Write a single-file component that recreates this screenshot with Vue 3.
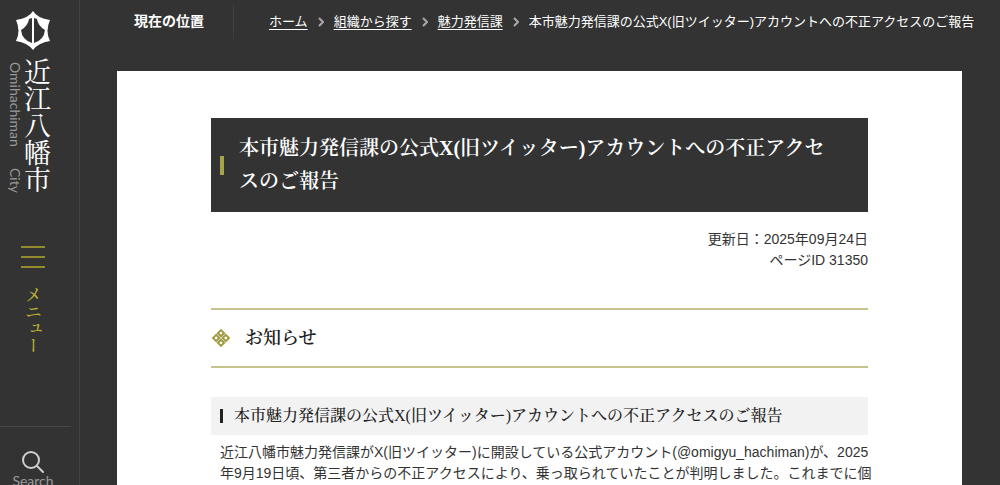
<template>
  <div class="page">
    <aside class="sidebar">
      <a class="logo" href="#" aria-label="近江八幡市">
        <svg class="emblem" viewBox="0 0 36 40" width="36" height="40">
          <path
            fill="#fff"
            fill-rule="evenodd"
            d="M18 0 Q22 7 35 9 Q30 20 35 30 Q23 32 18 39 Q13 32 1 30 Q6 20 1 9 Q14 7 18 0 Z
               M17 7 L14 8 Q13 15 6 19 Q7 29 17 32 Z M19 7 L22 8 Q23 15 30 19 Q29 29 19 32 Z"
          />
        </svg>
        <span class="names">
          <span class="name-en"><span>Omihachiman</span><span>City</span></span>
          <span class="name-ja">近江八幡市</span>
        </span>
      </a>
      <button class="menu-btn" type="button">
        <span class="lines"><i></i><i></i><i></i></span>
        <span class="menu-text">メニュー</span>
      </button>
      <button class="search-btn" type="button">
        <svg viewBox="0 0 24 24" width="24" height="24" fill="none" stroke="#d0d0d0" stroke-width="2">
          <circle cx="10" cy="10" r="8" />
          <path d="M16 16 L22 22" stroke-linecap="round" />
        </svg>
        <span>Search</span>
      </button>
    </aside>

    <div class="main">
      <nav class="location" aria-label="現在の位置">
        <strong class="location-label">現在の位置</strong>
        <ol class="crumbs">
          <li v-for="item in crumbs" :key="item">
            <a href="#">{{ item }}</a>
            <svg class="sep" viewBox="0 0 6 10" width="6" height="10" fill="none" stroke="#aaa" stroke-width="2">
              <path d="M1 1 L5 5 L1 9" />
            </svg>
          </li>
          <li>{{ title }}</li>
        </ol>
      </nav>

      <main class="article">
        <h1>{{ title }}</h1>
        <div class="meta">
          <p>更新日：2025年09月24日</p>
          <p>ページID 31350</p>
        </div>
        <h2>
          <svg viewBox="0 0 20 20" width="20" height="20">
            <g transform="rotate(45 10 10)">
              <g v-for="c in cells" :key="c.x + '-' + c.y">
                <rect :x="c.x" :y="c.y" width="6.4" height="6.4" fill="#a19d45" />
                <circle :cx="c.x + 3.2" :cy="c.y + 3.2" r="1.3" fill="#fff" />
              </g>
            </g>
          </svg>
          お知らせ
        </h2>
        <h3>{{ title }}</h3>
        <p class="body-text">
          近江八幡市魅力発信課がX(旧ツイッター)に開設している公式アカウント(@omigyu_hachiman)が、2025<br />年9月19日頃、第三者からの不正アクセスにより、乗っ取られていたことが判明しました。これまでに個
        </p>
      </main>
    </div>
  </div>
</template>

<script setup>
const title = '本市魅力発信課の公式X(旧ツイッター)アカウントへの不正アクセスのご報告'
const crumbs = ['ホーム', '組織から探す', '魅力発信課']

// four small tiles, turned 45 degrees into a diamond
const cells = [
  { x: 3.4, y: 3.4 },
  { x: 10.2, y: 3.4 },
  { x: 3.4, y: 10.2 },
  { x: 10.2, y: 10.2 },
]
</script>

<style>
body { margin: 0; background: #333; }
</style>

<style scoped>
.page {
  display: flex; height: 100vh; overflow: hidden; background: #333; color: #333;
  font-family: "Liberation Sans", "Noto Sans CJK JP", sans-serif; font-size: 14px; line-height: 21px;
}
h1, h2, h3, p, ol { margin: 0; padding: 0; }
button { padding: 0; border: 0; background: none; font: inherit; cursor: pointer; }

.sidebar { display: flex; flex-direction: column; flex: 0 0 79px; border-right: 1px solid #424242; }
.logo { display: flex; flex-direction: column; padding: 11px 0 0 8px; gap: 7px; text-decoration: none; color: #fff; }
.emblem { margin-left: 7px; }
.names { display: flex; align-items: stretch; }
.name-en {
  display: flex; justify-content: space-between; padding-top: 4px; writing-mode: vertical-rl;
  color: #999; font-family: Lato, sans-serif; font-size: 14px; line-height: 15px;
}
.name-ja {
  writing-mode: vertical-rl; line-height: 28px; font-size: 27px; font-weight: 400;
  font-family: "Noto Serif CJK JP", "Noto Sans CJK JP", serif;
}
.menu-btn { display: flex; flex-direction: column; align-items: center; width: 66px; margin-top: 53px; gap: 18px; }
.lines { display: flex; flex-direction: column; gap: 8px; }
.lines i { width: 24px; height: 2px; background: #908b2c; }
.menu-text {
  writing-mode: vertical-rl; color: #b9b130; font-size: 17px; line-height: 20px; font-weight: 500;
  font-family: "Noto Serif CJK JP", "Noto Sans CJK JP", serif;
}
.search-btn {
  display: flex; flex-direction: column; align-items: center; justify-content: flex-start;
  box-sizing: border-box; height: 59px; width: 71px; margin-top: auto; padding: 23px 5px 0 0;
  border-top: 1px solid #484848;
  color: #999; font-family: Lato, sans-serif; font-size: 14px; line-height: 14px;
}
.search-btn svg { flex: none; }

.main { flex: 1; min-width: 0; }
.location { display: flex; padding: 4px 0 30px 54px; color: #fff; font-size: 13px; line-height: 35px; white-space: nowrap; }
.location-label { flex: none; box-sizing: border-box; width: 100px; border-right: 1px solid #404040; font-size: 14px; }
.crumbs { display: flex; list-style: none; margin-left: 35px; }
.crumbs li { display: flex; align-items: center; }
.crumbs a { color: #fff; text-underline-offset: 3px; }
.sep { margin: 0 10px; }

.article { margin: 2px 38px 0 37px; padding: 47px 94px 40px; min-height: 100%; background: #fff; }
h1, h2, h3 { font-family: "Liberation Serif", "Noto Serif CJK JP", "Noto Sans CJK JP", serif; }
h1 {
  display: flex; align-items: center; gap: 15px; padding: 14px 24px 14px 9px;
  background: #333; color: #fff; font-size: 20px; font-weight: 600; line-height: 33px;
}
h1::before { content: ""; flex: none; width: 4px; height: 19px; background: #a8a44c; }
.meta { margin-top: 17px; text-align: right; }
h2 {
  display: flex; align-items: center; gap: 14px; margin-top: 37px; padding: 14px 0;
  border-top: 2px solid #c6c48c; border-bottom: 2px solid #c6c48c;
  font-size: 18px; font-weight: 600; line-height: 28px; color: #222;
}
h3 {
  display: flex; align-items: center; gap: 11px; margin-top: 29px; padding: 5px 9px;
  background: #f2f2f2; font-size: 16px; font-weight: 500; line-height: 28px; color: #222;
}
h3::before { content: ""; flex: none; width: 3px; height: 14px; background: #222; }
.body-text { margin: 7px -8px 0 9px; }
</style>
